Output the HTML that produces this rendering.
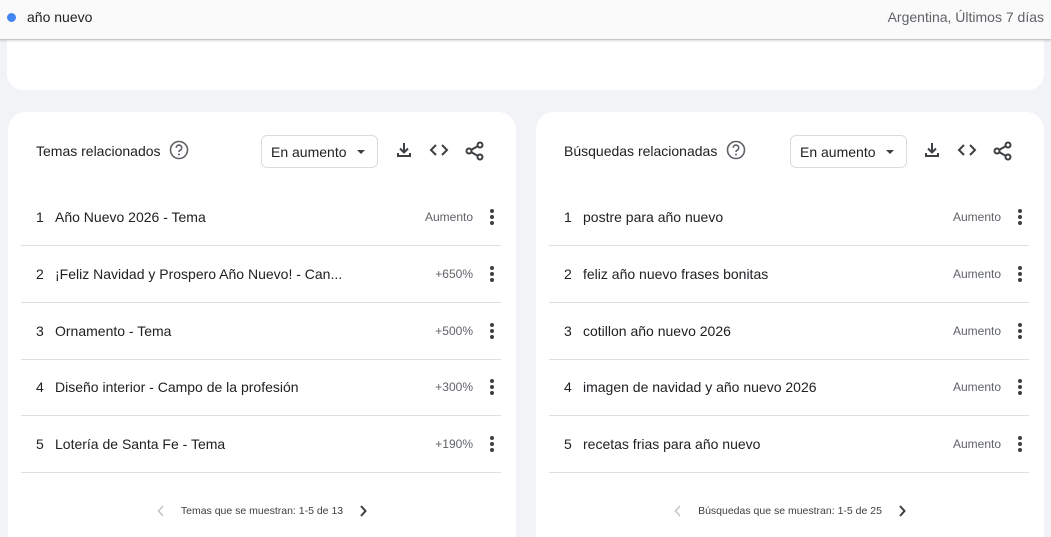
<!DOCTYPE html>
<html><head><meta charset="utf-8">
<style>
*{margin:0;padding:0;box-sizing:border-box}
html,body{width:1051px;height:537px;overflow:hidden}
body{background:#f1f3f7;font-family:"Liberation Sans",Arial,sans-serif;color:#202124;position:relative}
.top{position:absolute;left:0;top:0;width:1051px;height:40px;background:#fafafa;border-bottom:1px solid #c8c8c8;box-shadow:0 1px 2px rgba(0,0,0,.15);z-index:2}
.dot{position:absolute;left:7px;top:13px;width:9px;height:9px;border-radius:50%;background:#4285f4}
.q{position:absolute;left:27px;top:9px;font-size:14px;color:#202124}
.geo{position:absolute;right:7px;top:9px;font-size:14px;color:#5f6368}
.strip{position:absolute;left:7px;top:30px;width:1037px;height:60px;background:#fff;border-radius:0 0 16px 16px}
.card{position:absolute;top:112px;width:508px;height:425px;background:#fff;border-radius:18px 18px 0 0}
.title{position:absolute;left:28px;top:31px;font-size:14px;color:#202124}
.help{position:absolute;top:28px}
.sel{position:absolute;top:23px;width:117px;height:33px;border:1px solid #dadce0;border-radius:6px;font-size:14px;padding:8px 0 0 9px}
.sel:after{content:"";position:absolute;right:12px;top:14px;border:4px solid transparent;border-top:4px solid #3c4043;border-bottom:0}
.ic{position:absolute;top:29px}
.row{position:absolute;left:13px;width:480px;height:57px;border-bottom:1px solid #e0e0e0;font-size:14px}
.row .n{position:absolute;left:15px;top:20px}
.row .t{position:absolute;left:34px;top:20px}
.row .v{position:absolute;right:28px;top:21px;font-size:12px;color:#5f6368}
.row .m{position:absolute;right:7px;top:20px;width:4px}
.row .m i{display:block;width:4px;height:4px;border-radius:50%;background:#3c4043;margin-bottom:2px}
.foot{position:absolute;top:393px;font-size:10.5px;color:#3c4043;width:100%;text-align:center}
.foot svg{vertical-align:middle}
</style></head><body>
<div class="top"><div class="dot"></div><div class="q">año nuevo</div><div class="geo">Argentina, Últimos 7 días</div></div>
<div class="strip"></div>

<div class="card" style="left:8px">
<div class="title">Temas relacionados</div>
<svg class="help" style="left:161px" width="20" height="20" viewBox="0 0 20 20"><circle cx="10" cy="10" r="8.5" fill="none" stroke="#5f6368" stroke-width="1.6"/><path d="M7.3 7.8a2.7 2.7 0 1 1 3.8 2.4c-.8.4-1.1.9-1.1 1.8" fill="none" stroke="#5f6368" stroke-width="1.6"/><circle cx="10" cy="14.5" r="1" fill="#5f6368"/></svg>
<div class="sel" style="left:253px">En aumento</div>
<svg class="ic" style="left:387px" width="18" height="18" viewBox="0 0 18 18"><path d="M9 2v9M5 7.5l4 4 4-4M3 12v3h12v-3" fill="none" stroke="#3c4043" stroke-width="2"/></svg>
<svg class="ic" style="left:421px" width="20" height="18" viewBox="0 0 20 18"><path d="M7 4L2 9l5 5M13 4l5 5-5 5" fill="none" stroke="#3c4043" stroke-width="2"/></svg>
<svg class="ic" style="left:457px" width="20" height="20" viewBox="0 0 20 20"><circle cx="15" cy="4" r="2.5" fill="none" stroke="#3c4043" stroke-width="2"/><circle cx="4" cy="10" r="2.5" fill="none" stroke="#3c4043" stroke-width="2"/><circle cx="15" cy="16" r="2.5" fill="none" stroke="#3c4043" stroke-width="2"/><path d="M6 9l7-4M6 11l7 4" stroke="#3c4043" stroke-width="2"/></svg>
<div class="row" style="top:77px"><span class="n">1</span><span class="t">Año Nuevo 2026 - Tema</span><span class="v">Aumento</span><span class="m"><i></i><i></i><i></i></span></div>
<div class="row" style="top:134px"><span class="n">2</span><span class="t">¡Feliz Navidad y Prospero Año Nuevo! - Can...</span><span class="v">+650%</span><span class="m"><i></i><i></i><i></i></span></div>
<div class="row" style="top:191px"><span class="n">3</span><span class="t">Ornamento - Tema</span><span class="v">+500%</span><span class="m"><i></i><i></i><i></i></span></div>
<div class="row" style="top:247px"><span class="n">4</span><span class="t">Diseño interior - Campo de la profesión</span><span class="v">+300%</span><span class="m"><i></i><i></i><i></i></span></div>
<div class="row" style="top:304px"><span class="n">5</span><span class="t">Lotería de Santa Fe - Tema</span><span class="v">+190%</span><span class="m"><i></i><i></i><i></i></span></div>
<div class="foot"><svg width="8" height="12" viewBox="0 0 8 12" style="margin-right:16px"><path d="M6 1L1.5 6 6 11" fill="none" stroke="#c4c4c4" stroke-width="1.5"/></svg>Temas que se muestran: 1-5 de 13<svg width="8" height="12" viewBox="0 0 8 12" style="margin-left:16px"><path d="M2 1l4.5 5L2 11" fill="none" stroke="#3c4043" stroke-width="2"/></svg></div>
</div>

<div class="card" style="left:536px">
<div class="title">Búsquedas relacionadas</div>
<svg class="help" style="left:190px" width="20" height="20" viewBox="0 0 20 20"><circle cx="10" cy="10" r="8.5" fill="none" stroke="#5f6368" stroke-width="1.6"/><path d="M7.3 7.8a2.7 2.7 0 1 1 3.8 2.4c-.8.4-1.1.9-1.1 1.8" fill="none" stroke="#5f6368" stroke-width="1.6"/><circle cx="10" cy="14.5" r="1" fill="#5f6368"/></svg>
<div class="sel" style="left:254px">En aumento</div>
<svg class="ic" style="left:387px" width="18" height="18" viewBox="0 0 18 18"><path d="M9 2v9M5 7.5l4 4 4-4M3 12v3h12v-3" fill="none" stroke="#3c4043" stroke-width="2"/></svg>
<svg class="ic" style="left:421px" width="20" height="18" viewBox="0 0 20 18"><path d="M7 4L2 9l5 5M13 4l5 5-5 5" fill="none" stroke="#3c4043" stroke-width="2"/></svg>
<svg class="ic" style="left:457px" width="20" height="20" viewBox="0 0 20 20"><circle cx="15" cy="4" r="2.5" fill="none" stroke="#3c4043" stroke-width="2"/><circle cx="4" cy="10" r="2.5" fill="none" stroke="#3c4043" stroke-width="2"/><circle cx="15" cy="16" r="2.5" fill="none" stroke="#3c4043" stroke-width="2"/><path d="M6 9l7-4M6 11l7 4" stroke="#3c4043" stroke-width="2"/></svg>
<div class="row" style="top:77px"><span class="n">1</span><span class="t">postre para año nuevo</span><span class="v">Aumento</span><span class="m"><i></i><i></i><i></i></span></div>
<div class="row" style="top:134px"><span class="n">2</span><span class="t">feliz año nuevo frases bonitas</span><span class="v">Aumento</span><span class="m"><i></i><i></i><i></i></span></div>
<div class="row" style="top:191px"><span class="n">3</span><span class="t">cotillon año nuevo 2026</span><span class="v">Aumento</span><span class="m"><i></i><i></i><i></i></span></div>
<div class="row" style="top:247px"><span class="n">4</span><span class="t">imagen de navidad y año nuevo 2026</span><span class="v">Aumento</span><span class="m"><i></i><i></i><i></i></span></div>
<div class="row" style="top:304px"><span class="n">5</span><span class="t">recetas frias para año nuevo</span><span class="v">Aumento</span><span class="m"><i></i><i></i><i></i></span></div>
<div class="foot"><svg width="8" height="12" viewBox="0 0 8 12" style="margin-right:16px"><path d="M6 1L1.5 6 6 11" fill="none" stroke="#c4c4c4" stroke-width="1.5"/></svg>Búsquedas que se muestran: 1-5 de 25<svg width="8" height="12" viewBox="0 0 8 12" style="margin-left:16px"><path d="M2 1l4.5 5L2 11" fill="none" stroke="#3c4043" stroke-width="2"/></svg></div>
</div>
</body></html>
